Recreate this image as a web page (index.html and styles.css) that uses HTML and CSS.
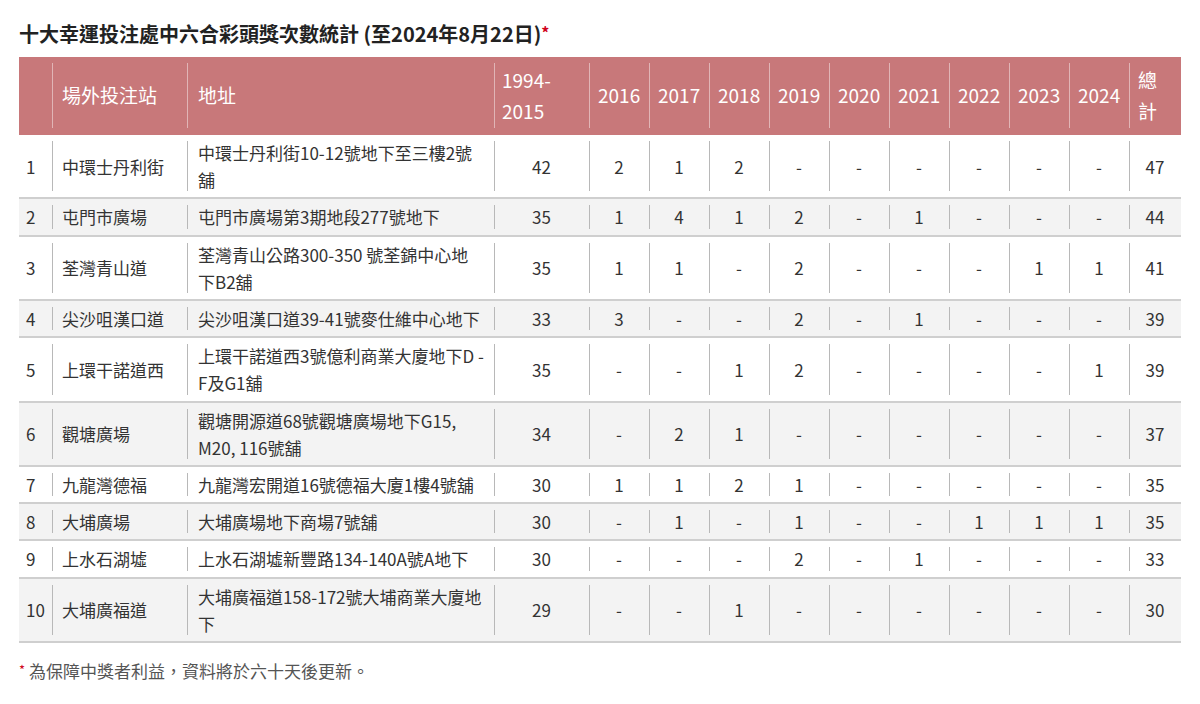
FILE: index.html
```html
<!DOCTYPE html>
<html lang="zh-Hant">
<head>
<meta charset="utf-8">
<title>十大幸運投注處</title>
<link rel="stylesheet" href="styles.css">
</head>
<body>
<div class="page">
  <h1 class="title">十大幸運投注處中六合彩頭獎次數統計 (至2024年8月22日)<span class="star">*</span></h1>
  <table class="stats">
    <colgroup>
      <col class="c-no"><col class="c-st"><col class="c-ad"><col class="c-old">
      <col class="c-yr"><col class="c-yr"><col class="c-yr"><col class="c-yr"><col class="c-yr">
      <col class="c-yr"><col class="c-yr"><col class="c-yr"><col class="c-yr"><col class="c-tot">
    </colgroup>
    <thead>
      <tr>
        <th class="first"></th>
        <th>場外投注站</th>
        <th>地址</th>
        <th>1994-2015</th>
        <th>2016</th><th>2017</th><th>2018</th><th>2019</th><th>2020</th><th>2021</th><th>2022</th><th>2023</th><th>2024</th>
        <th>總計</th>
      </tr>
    </thead>
    <tbody>
      <tr><td class="first">1</td><td>中環士丹利街</td><td>中環士丹利街10-12號地下至三樓2號舖</td><td class="n">42</td><td class="n">2</td><td class="n">1</td><td class="n">2</td><td class="n">-</td><td class="n">-</td><td class="n">-</td><td class="n">-</td><td class="n">-</td><td class="n">-</td><td class="n">47</td></tr>
      <tr><td class="first">2</td><td>屯門市廣場</td><td>屯門市廣場第3期地段277號地下</td><td class="n">35</td><td class="n">1</td><td class="n">4</td><td class="n">1</td><td class="n">2</td><td class="n">-</td><td class="n">1</td><td class="n">-</td><td class="n">-</td><td class="n">-</td><td class="n">44</td></tr>
      <tr><td class="first">3</td><td>荃灣青山道</td><td>荃灣青山公路300-350 號荃錦中心地下B2舖</td><td class="n">35</td><td class="n">1</td><td class="n">1</td><td class="n">-</td><td class="n">2</td><td class="n">-</td><td class="n">-</td><td class="n">-</td><td class="n">1</td><td class="n">1</td><td class="n">41</td></tr>
      <tr><td class="first">4</td><td>尖沙咀漢口道</td><td>尖沙咀漢口道39-41號麥仕維中心地下</td><td class="n">33</td><td class="n">3</td><td class="n">-</td><td class="n">-</td><td class="n">2</td><td class="n">-</td><td class="n">1</td><td class="n">-</td><td class="n">-</td><td class="n">-</td><td class="n">39</td></tr>
      <tr><td class="first">5</td><td>上環干諾道西</td><td>上環干諾道西3號億利商業大廈地下D -F及G1舖</td><td class="n">35</td><td class="n">-</td><td class="n">-</td><td class="n">1</td><td class="n">2</td><td class="n">-</td><td class="n">-</td><td class="n">-</td><td class="n">-</td><td class="n">1</td><td class="n">39</td></tr>
      <tr><td class="first">6</td><td>觀塘廣場</td><td>觀塘開源道68號觀塘廣場地下G15, M20, 116號舖</td><td class="n">34</td><td class="n">-</td><td class="n">2</td><td class="n">1</td><td class="n">-</td><td class="n">-</td><td class="n">-</td><td class="n">-</td><td class="n">-</td><td class="n">-</td><td class="n">37</td></tr>
      <tr><td class="first">7</td><td>九龍灣德福</td><td>九龍灣宏開道16號德福大廈1樓4號舖</td><td class="n">30</td><td class="n">1</td><td class="n">1</td><td class="n">2</td><td class="n">1</td><td class="n">-</td><td class="n">-</td><td class="n">-</td><td class="n">-</td><td class="n">-</td><td class="n">35</td></tr>
      <tr><td class="first">8</td><td>大埔廣場</td><td>大埔廣場地下商場7號舖</td><td class="n">30</td><td class="n">-</td><td class="n">1</td><td class="n">-</td><td class="n">1</td><td class="n">-</td><td class="n">-</td><td class="n">1</td><td class="n">1</td><td class="n">1</td><td class="n">35</td></tr>
      <tr><td class="first">9</td><td>上水石湖墟</td><td>上水石湖墟新豐路134-140A號A地下</td><td class="n">30</td><td class="n">-</td><td class="n">-</td><td class="n">-</td><td class="n">2</td><td class="n">-</td><td class="n">1</td><td class="n">-</td><td class="n">-</td><td class="n">-</td><td class="n">33</td></tr>
      <tr><td class="first">10</td><td>大埔廣福道</td><td>大埔廣福道158-172號大埔商業大廈地下</td><td class="n">29</td><td class="n">-</td><td class="n">-</td><td class="n">1</td><td class="n">-</td><td class="n">-</td><td class="n">-</td><td class="n">-</td><td class="n">-</td><td class="n">-</td><td class="n">30</td></tr>
    </tbody>
  </table>
  <p class="note"><span class="star">*</span> 為保障中獎者利益，資料將於六十天後更新。</p>
</div>
</body>
</html>
```

FILE: styles.css
```css
html, body {
  margin: 0;
  padding: 0;
  background: #ffffff;
}

body {
  font-family: "Noto Sans CJK TC", "Noto Sans", sans-serif;
  color: #333333;
}

.page {
  padding: 16px 19px 0 19px;
}

.title {
  margin: 0 0 7px 0;
  font-size: 20px;
  line-height: 32px;
  font-weight: 700;
  color: #222222;
}

.star {
  color: #d0021b;
}

.title .star {
  font-size: 16px;
  vertical-align: 3px;
}

.stats {
  width: 1162px;
  table-layout: fixed;
  border-collapse: separate;
  border-spacing: 0;
}

.c-no { width: 33px; }
.c-st { width: 135px; }
.c-ad { width: 307px; }
.c-old { width: 95px; }
.c-yr { width: 60px; }
.c-tot { width: 52px; }

.stats th {
  background-color: #c8787a;
  background-image: linear-gradient(rgba(255, 255, 255, 0.45), rgba(255, 255, 255, 0.45));
  background-repeat: no-repeat;
  background-position: left 6px;
  background-size: 1px calc(100% - 13px);
  color: #ffffff;
  font-weight: 400;
  font-size: 19px;
  line-height: 30.5px;
  text-align: left;
  vertical-align: middle;
  padding: 8px 7px 9px 9px;
  height: 61px;
}

.stats th:nth-child(2) { padding-left: 10px; }
.stats th:nth-child(3) { padding-left: 11px; }
.stats th:nth-child(4) { padding-left: 8px; }

.stats th.first {
  background-image: none;
}

.stats td {
  background-image: linear-gradient(#b8b8b8, #b8b8b8);
  background-repeat: no-repeat;
  background-position: left 6px;
  background-size: 1px calc(100% - 12px);
  border-bottom: 2px solid #cfcfcf;
  font-size: 17px;
  line-height: 27.2px;
  padding: 4px 10px 4px 10px;
  vertical-align: middle;
  text-align: left;
}

.stats td:nth-child(3) {
  padding-left: 11px;
  padding-right: 9px;
}

.stats td.first {
  background-image: none;
  padding-left: 7px;
  padding-right: 2px;
}

.stats td.n {
  text-align: center;
  padding-left: 4px;
  padding-right: 4px;
}

.stats tbody tr:nth-child(even) td {
  background-color: #f3f3f3;
}

.note {
  margin: 13px 0 0 0;
  font-size: 17px;
  line-height: 27px;
  color: #555555;
}

.note .star {
  font-size: 13px;
  vertical-align: 3px;
}
```
